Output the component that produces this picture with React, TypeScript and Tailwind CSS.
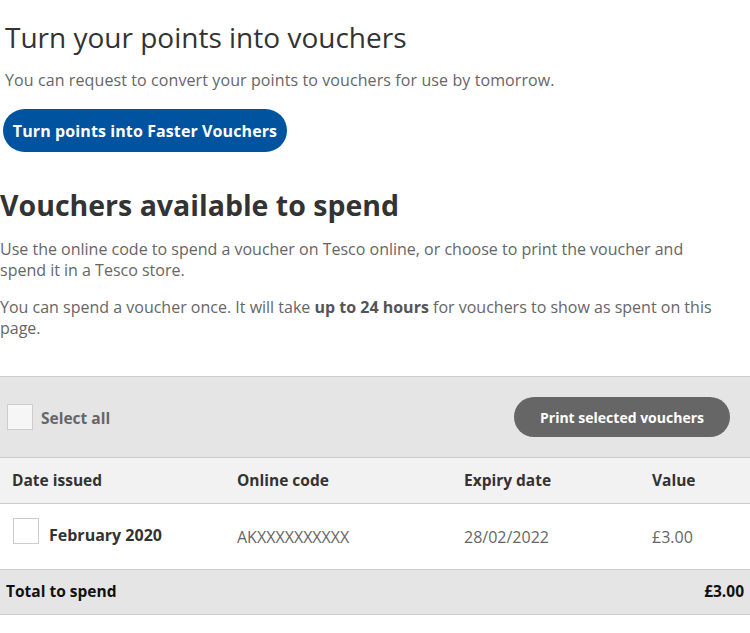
import React from "react";

const font = { fontFamily: "'Open Sans', 'Noto Sans', sans-serif" };

export default function App() {
  return (
    <div className="w-[750px] h-[633px] bg-white overflow-hidden text-[#333]" style={font}>
      <div className="pl-[5px] pt-[19px]">
        <h1 className="text-[28px] leading-[36px] font-normal text-[#333]">Turn your points into vouchers</h1>
        <p className="mt-[13px] text-[16px] leading-[24px] text-[#666] tracking-[0.1px]">
          You can request to convert your points to vouchers for use by tomorrow.
        </p>
      </div>
      <div className="pl-[3px] mt-[17px]">
        <button className="h-[43px] w-[284px] rounded-full bg-[#00539f] text-white text-[16px] font-bold tracking-[0.1px]">
          Turn points into Faster Vouchers
        </button>
      </div>
      <h2 className="mt-[35px] text-[28.5px] leading-[36px] font-bold text-[#333]">Vouchers available to spend</h2>
      <p className="mt-[16px] text-[16px] leading-[21px] text-[#666] w-[720px]">
        Use the online code to spend a voucher on Tesco online, or choose to print the voucher and spend it in a Tesco store.
      </p>
      <p className="mt-[16px] text-[16px] leading-[21px] text-[#666] w-[740px]">
        You can spend a voucher once. It will take <strong className="font-bold text-[#555]">up to 24 hours</strong> for vouchers to show as spent on this page.
      </p>
      <div className="mt-[37px] border-t border-[#ccc]">
        <div className="h-[80px] bg-[#e5e5e5] flex items-center justify-between pl-[7px] pr-[20px]">
          <div className="flex items-center gap-[8px]">
            <span className="w-[26px] h-[26px] border border-[#ccc] bg-[#f6f6f6] inline-block" />
            <span className="text-[15.5px] font-bold text-[#666] mt-[4px]">Select all</span>
          </div>
          <button className="h-[40px] w-[216px] rounded-full bg-[#666] text-white text-[14px] font-bold">
            Print selected vouchers
          </button>
        </div>
        <div className="border-t border-[#ccc] h-[46px] bg-[#f2f2f2] grid grid-cols-[237px_227px_188px_1fr] items-center text-[15.5px] font-bold text-[#333]">
          <span className="pl-[12px]">Date issued</span>
          <span>Online code</span>
          <span>Expiry date</span>
          <span>Value</span>
        </div>
        <div className="border-t border-[#ccc] h-[66px] bg-white grid grid-cols-[237px_227px_188px_1fr] items-center text-[16px] text-[#666]">
          <span className="pl-[13px] flex items-center gap-[10px]">
            <span className="w-[26px] h-[26px] border border-[#ccc] bg-white inline-block mb-[11px]" />
            <span className="font-bold text-[#333] mb-[3px]">February 2020</span>
          </span>
          <span>AKXXXXXXXXXX</span>
          <span>28/02/2022</span>
          <span>£3.00</span>
        </div>
        <div className="border-t border-b border-[#ccc] h-[46px] bg-[#e5e5e5] flex items-center justify-between pl-[6px] pr-[6px] text-[15.5px] font-bold text-[#111]">
          <span>Total to spend</span>
          <span>£3.00</span>
        </div>
      </div>
    </div>
  );
}
